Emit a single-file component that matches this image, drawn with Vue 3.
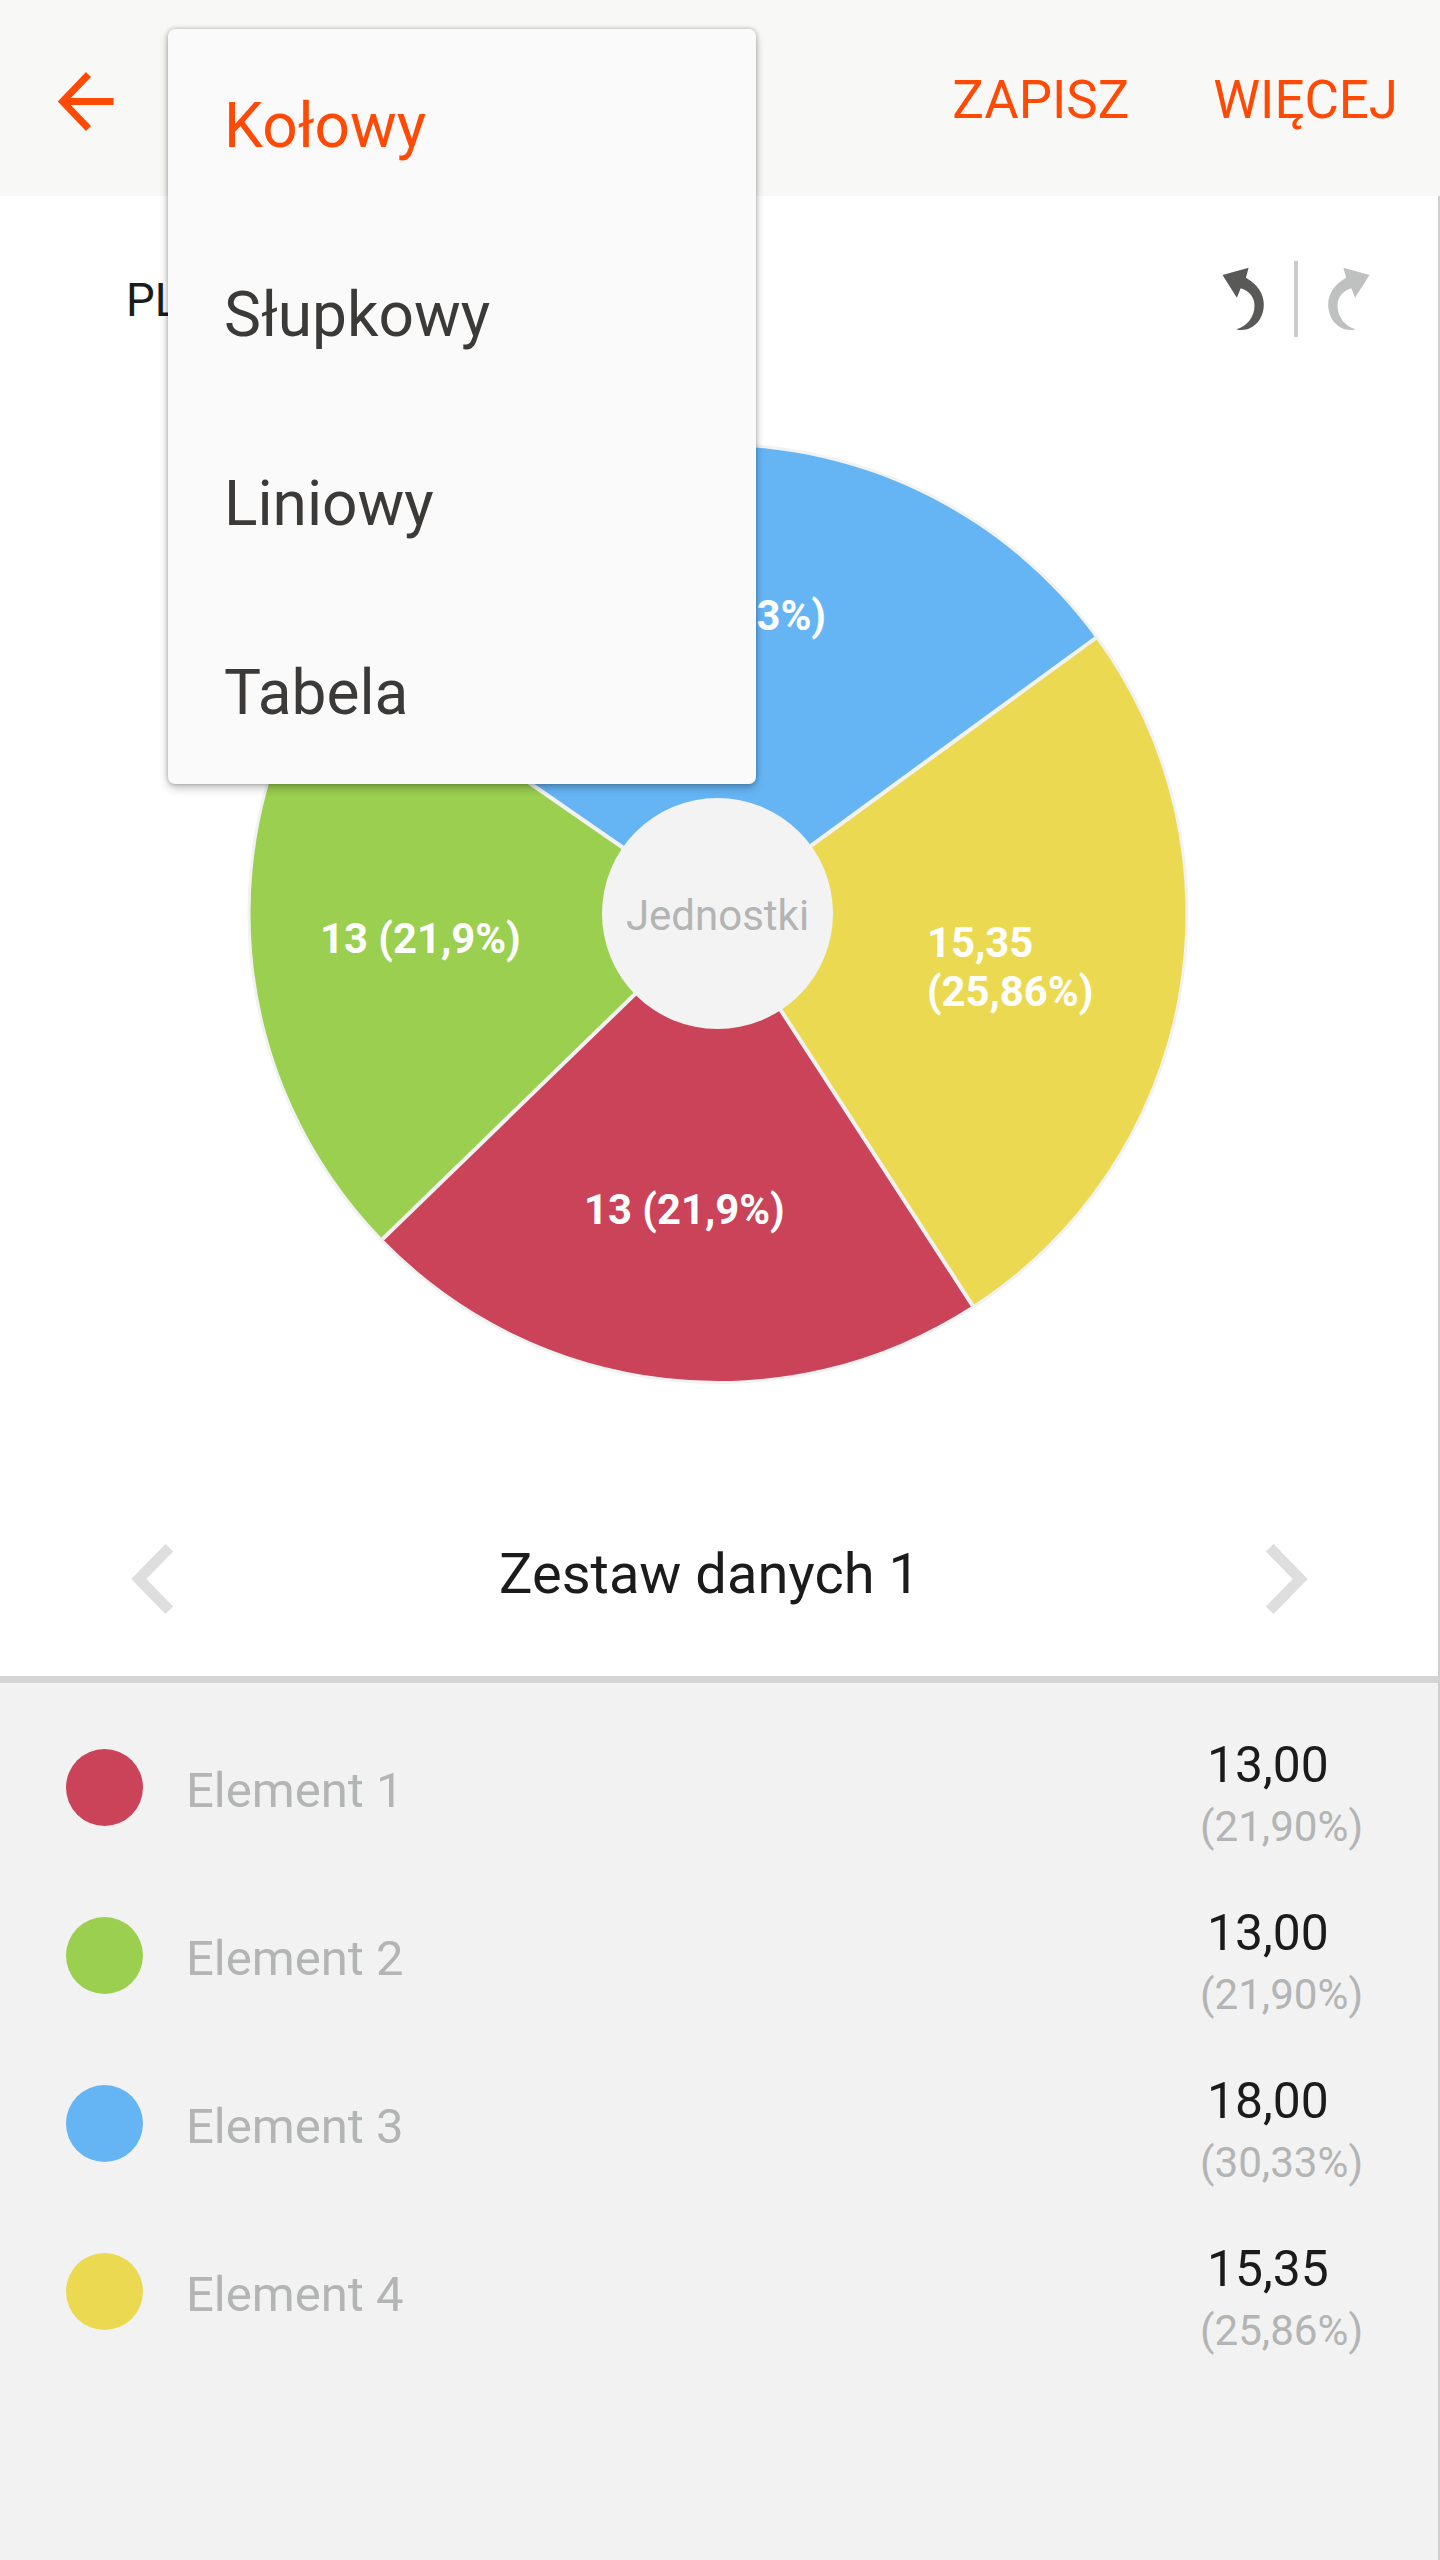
<template>
  <div class="screen">
    <header class="app-bar">
      <button class="icon-btn" aria-label="Wstecz">
        <svg class="back-icon" viewBox="0 0 56 60" width="56" height="60">
          <path d="M30.5 2.5 L4.5 29.5 L30.5 56.5 M5 29.5 H55.5" fill="none" stroke="#ff4a05" stroke-width="7" />
        </svg>
      </button>
      <nav class="app-bar-actions">
        <button class="action">ZAPISZ</button>
        <button class="action">WIĘCEJ</button>
      </nav>
    </header>

    <main class="chart-panel">
      <div class="toolbar">
        <span class="chart-title">PL</span>
        <div class="history">
          <svg class="undo" viewBox="0 0 42 64" width="42" height="64">
            <path :d="arrowPath" />
          </svg>
          <span class="divider"></span>
          <svg class="redo" viewBox="0 0 42 64" width="42" height="64">
            <path :d="arrowPath" transform="translate(42 0) scale(-1 1)" />
          </svg>
        </div>
      </div>

      <svg class="pie" viewBox="-480 -480 960 960" width="960" height="960">
        <circle cy="0.5" r="470.5" fill="#f2f2f2" />
        <g transform="translate(0 0.5)">
          <path v-for="s in slices" :key="s.name" :d="s.path" :fill="s.color" />
          <line
            v-for="s in slices"
            :key="s.name + '-line'"
            x1="0"
            y1="0"
            :x2="s.edge.x"
            :y2="s.edge.y"
            stroke="#f2f2f2"
            stroke-width="4"
          />
        </g>
        <circle cx="-0.5" cy="0.5" r="115.5" fill="#f3f3f3" />
        <text class="units" x="-0.5" y="17" text-anchor="middle">Jednostki</text>
        <g class="labels">
          <text x="-398" y="40">13 (21,9%)</text>
          <text x="-134" y="311">13 (21,9%)</text>
          <text x="108" y="-283" text-anchor="end">18 (30,33%)</text>
          <text x="209" y="44">15,35</text>
          <text x="209" y="93">(25,86%)</text>
        </g>
      </svg>

      <div class="dataset-nav">
        <button class="icon-btn" aria-label="Poprzedni">
          <svg viewBox="0 0 42 70" width="42" height="70">
            <path d="M38.3 3.7 L7.8 35 L38.3 66.3" fill="none" stroke="#dedede" stroke-width="10.8" />
          </svg>
        </button>
        <span class="dataset-name">Zestaw danych 1</span>
        <button class="icon-btn" aria-label="Następny">
          <svg viewBox="0 0 42 70" width="42" height="70">
            <path d="M3.7 3.7 L34.2 35 L3.7 66.3" fill="none" stroke="#dedede" stroke-width="10.8" />
          </svg>
        </button>
      </div>
    </main>

    <ul class="legend">
      <li v-for="item in items" :key="item.name" class="legend-row">
        <span class="dot" :style="{ background: item.color }"></span>
        <span class="legend-name">{{ item.name }}</span>
        <span class="legend-values">
          <span class="value">{{ format(item.value) }}</span>
          <span class="percent">({{ format(item.percent) }}%)</span>
        </span>
      </li>
    </ul>

    <!-- Lista typów wykresu -->
    <ul class="type-menu">
      <li
        v-for="type in chartTypes"
        :key="type"
        class="type-item"
        :class="{ active: type === selectedType }"
        @click="selectedType = type"
      >
        {{ type }}
      </li>
    </ul>
  </div>
</template>

<script setup>
import { ref, computed } from 'vue';

const chartTypes = ['Kołowy', 'Słupkowy', 'Liniowy', 'Tabela'];
const selectedType = ref('Kołowy');

const items = ref([
  { name: 'Element 1', value: 13, percent: 21.9, color: '#ca4358' },
  { name: 'Element 2', value: 13, percent: 21.9, color: '#9acf4f' },
  { name: 'Element 3', value: 18, percent: 30.33, color: '#65b5f5' },
  { name: 'Element 4', value: 15.35, percent: 25.86, color: '#ecd952' }
]);

const arrowPath =
  'M0.5 8 L26.6 0.7 L23.9 10.7 C35 17 41.8 26 41.8 37.5 C41.8 52 32 63 19.4 63 C17 63 15 62.6 14.2 62.2 C25 59.5 32.5 50 32.5 38.5 C32.5 31 28 24 18.7 21.3 L14.9 30.7 Z';

const RADIUS = 467.5;
const START_ANGLE = 57;

function point(angle) {
  const rad = (angle * Math.PI) / 180;
  return { x: RADIUS * Math.cos(rad), y: RADIUS * Math.sin(rad) };
}

const slices = computed(() => {
  const total = items.value.reduce((sum, item) => sum + item.value, 0);
  let angle = START_ANGLE;
  return items.value.map((item) => {
    const from = point(angle);
    angle += (item.value / total) * 360;
    const to = point(angle);
    return {
      name: item.name,
      color: item.color,
      edge: from,
      path: `M0 0 L${from.x} ${from.y} A${RADIUS} ${RADIUS} 0 0 1 ${to.x} ${to.y} Z`
    };
  });
});

function format(value) {
  return value.toFixed(2).replace('.', ',');
}
</script>

<style>
body {
  margin: 0;
  background: #ffffff;
}
</style>

<style scoped>
.screen {
  position: relative;
  display: flex;
  flex-direction: column;
  width: 1440px;
  height: 2560px;
  overflow: hidden;
  font-family: Roboto, sans-serif;
  color: #1b1b1b;
}

button {
  padding: 0;
  border: none;
  background: none;
  font: inherit;
  cursor: pointer;
}

.icon-btn {
  display: flex;
}

.app-bar {
  box-sizing: border-box;
  display: flex;
  align-items: center;
  justify-content: space-between;
  height: 196px;
  padding: 4px 42px 0 57.5px;
  background: #f8f8f6;
}

.back-icon {
  margin-top: 4px;
}

.app-bar-actions {
  display: flex;
  gap: 84px;
}

.action {
  color: #ff4a05;
  font-size: 52.8px;
  line-height: 64px;
}

.chart-panel {
  box-sizing: border-box;
  display: flex;
  flex-direction: column;
  height: 1480px;
  background: #ffffff;
  border-right: 2px solid #d0d0d0;
}

.toolbar {
  box-sizing: border-box;
  display: flex;
  align-items: center;
  justify-content: space-between;
  height: 207px;
  padding: 0 68px 0 126px;
}

.chart-title {
  padding-top: 2px;
  font-size: 45.5px;
}

.history {
  display: flex;
  align-items: center;
  gap: 30px;
  margin-bottom: 2px;
}

.undo {
  fill: #595957;
}

.redo {
  fill: #bfc1c0;
}

.divider {
  width: 4px;
  height: 76px;
  background: #cbcbcb;
}

.pie {
  flex: none;
  margin: 30px 0 0 238px;
}

.units {
  font-size: 42px;
  fill: #b3b4b4;
}

.labels {
  font-size: 41.8px;
  font-weight: 700;
  fill: #ffffff;
}

.dataset-nav {
  display: flex;
  align-items: center;
  justify-content: space-between;
  height: 70px;
  margin-top: 151px;
  padding: 0 130px 0 131px;
}

.dataset-name {
  margin: 0 20px 10px 0;
  font-size: 56px;
  line-height: 60px;
}

.legend {
  box-sizing: border-box;
  flex: 1;
  margin: 0;
  padding: 20px 0 0;
  list-style: none;
  background: #f2f2f2;
  border-top: 7px solid #d5d5d5;
  border-right: 2px solid #d0d0d0;
}

.legend-row {
  display: flex;
  align-items: center;
  height: 168px;
  padding-left: 66px;
}

.dot {
  width: 77px;
  height: 77px;
  border-radius: 50%;
}

.legend-name {
  flex: 1;
  margin-left: 43px;
  padding-top: 6px;
  font-size: 49px;
  color: #b3b4b4;
}

.legend-values {
  align-self: flex-start;
  display: flex;
  flex-direction: column;
  width: 238px;
  margin-top: 32px;
}

.value {
  padding-left: 7px;
  font-size: 49.8px;
  line-height: 60px;
}

.percent {
  font-size: 42.2px;
  line-height: 64px;
  color: #b3b4b4;
}

.type-menu {
  position: absolute;
  top: 29px;
  left: 168px;
  box-sizing: border-box;
  width: 588px;
  height: 755px;
  margin: 0;
  padding: 2px 0 0;
  list-style: none;
  background: #fafafa;
  border-radius: 7px;
  box-shadow: 0 0 4px rgba(0, 0, 0, 0.26), 0 4px 10px rgba(0, 0, 0, 0.24);
}

.type-item {
  height: 189px;
  padding-left: 56px;
  font-size: 62.2px;
  line-height: 189px;
  color: #3b3a38;
}

.type-item.active {
  color: #ff4a05;
}
</style>
